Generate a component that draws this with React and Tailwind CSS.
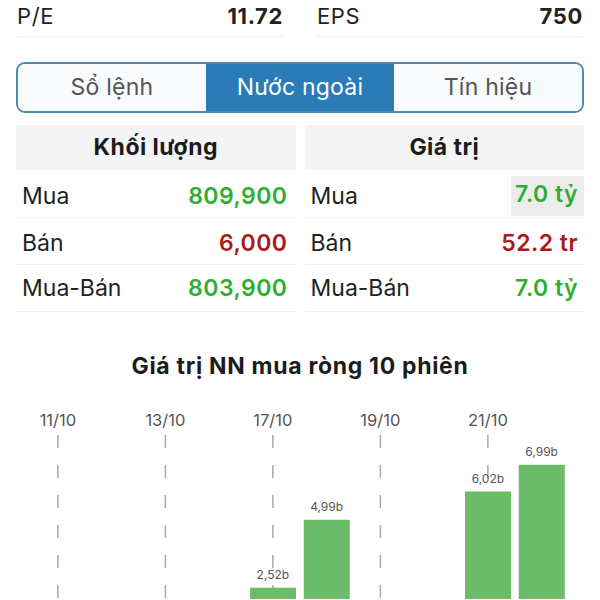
const stats = [
  { label: 'P/E', value: '11.72' },
  { label: 'EPS', value: '750' },
];

const tabs = ['Sổ lệnh', 'Nước ngoài', 'Tín hiệu'];

const volume = [
  { label: 'Mua', value: '809,900', tone: 'up' },
  { label: 'Bán', value: '6,000', tone: 'down' },
  { label: 'Mua-Bán', value: '803,900', tone: 'up' },
];

const worth = [
  { label: 'Mua', value: '7.0 tỷ', tone: 'up', active: true },
  { label: 'Bán', value: '52.2 tr', tone: 'down' },
  { label: 'Mua-Bán', value: '7.0 tỷ', tone: 'up' },
];

const rowStyles = ['h-[48px] pt-[5px]', 'h-[47px] pt-[4px]', 'h-[47px]'];

// net foreign buy, billions
const sessions = [
  { date: '11/10', v: 0.85 },
  { date: '12/10', v: 0.31 },
  { date: '13/10', v: 1.12 },
  { date: '14/10', v: 0.46 },
  { date: '17/10', v: 2.52 },
  { date: '18/10', v: 4.99 },
  { date: '19/10', v: 1.05 },
  { date: '20/10', v: 0.72 },
  { date: '21/10', v: 6.02 },
  { date: '24/10', v: 6.99 },
];

function StatTable({ title, rows, padRight }) {
  return (
    <div className="flex flex-col">
      <div className="h-[45px] flex items-center justify-center bg-[#f4f4f4] text-[23px] tracking-[0.02em] font-bold text-[#1c1c1c]">
        {title}
      </div>
      {rows.map((r, i) => (
        <div
          key={r.label}
          className={`${rowStyles[i]} flex items-center justify-between border-b border-[#efefef] pl-[6px]`}
        >
          <span className="text-[23px] text-[#1f1f1f]">{r.label}</span>
          <span
            className={`${r.active ? 'self-end mb-[1px] h-[40px] bg-[#ececec] pl-[4px] pb-[3px]' : ''} ${padRight} flex items-center text-[23px] tracking-[0.02em] font-semibold ${
              r.tone === 'up' ? 'text-[#2fae2f]' : 'text-[#a91a1a]'
            }`}
          >
            {r.value}
          </span>
        </div>
      ))}
    </div>
  );
}

function NetBuyChart() {
  const slot = 53.75;
  const left = 31;
  const zero = 276;
  const k = 27.5;
  return (
    <svg width="600" height="218" className="block mt-[1px]">
      {sessions.map((s, i) =>
        i % 2 === 0 ? (
          <g key={'l' + i}>
            <text
              x={left + slot * i + slot / 2}
              y="45"
              textAnchor="middle"
              fontSize="16.5"
              fill="#555"
            >
              {s.date}
            </text>
            <line
              x1={left + slot * i + slot / 2}
              x2={left + slot * i + slot / 2}
              y1="54"
              y2="218"
              stroke="#a9a9a9"
              strokeWidth="1.5"
              strokeDasharray="13 17"
            />
          </g>
        ) : null
      )}
      {sessions.map((s, i) => {
        const top = zero - s.v * k;
        return (
          <g key={'b' + i}>
            <rect x={left + slot * i + 4} y={top} width="46" height={s.v * k} fill="#6cbb69" />
            {s.v > 2 && (
              <text
                x={left + slot * i + slot / 2}
                y={top - 8.5}
                textAnchor="middle"
                fontSize="12"
                fill="#555"
              >
                {s.v.toFixed(2).replace('.', ',')}b
              </text>
            )}
          </g>
        );
      })}
    </svg>
  );
}

export default function App() {
  return (
    <div
      className="w-[600px] h-[600px] overflow-hidden bg-white"
      style={{ fontFamily: 'Inter, "Noto Sans", sans-serif' }}
    >
      <div className="flex gap-[34px] px-[17px]">
        {stats.map((s) => (
          <div
            key={s.label}
            className="flex-1 h-[37px] pt-[2px] flex justify-between border-b border-[#efefef] leading-[28px] tracking-[0.04em]"
          >
            <span className="text-[22px] text-[#222]">{s.label}</span>
            <span className="text-[22px] font-bold text-[#222]">{s.value}</span>
          </div>
        ))}
      </div>

      <div className="mx-[16px] mt-[25px] h-[51px] flex rounded-[9px] border-2 border-[#4a8ab3] overflow-hidden">
        {tabs.map((t, i) => (
          <div
            key={t}
            className={`flex-1 flex items-center justify-center text-[23px] tracking-[0.01em] ${
              i === 1 ? 'bg-[#2b7bb8] text-white' : 'bg-[#f8fafb] text-[#555]'
            }`}
          >
            {t}
          </div>
        ))}
      </div>

      <div className="mt-[12px] px-[16px] grid grid-cols-2 gap-[9px]">
        <StatTable title="Khối lượng" rows={volume} padRight="pr-[8px]" />
        <StatTable title="Giá trị" rows={worth} padRight="pr-[6px]" />
      </div>

      <div className="mt-[40px] h-[28px] text-center text-[23px] leading-[28px] tracking-[0.03em] font-bold text-[#1c1c1c]">
        Giá trị NN mua ròng 10 phiên
      </div>

      <NetBuyChart />
    </div>
  );
}
